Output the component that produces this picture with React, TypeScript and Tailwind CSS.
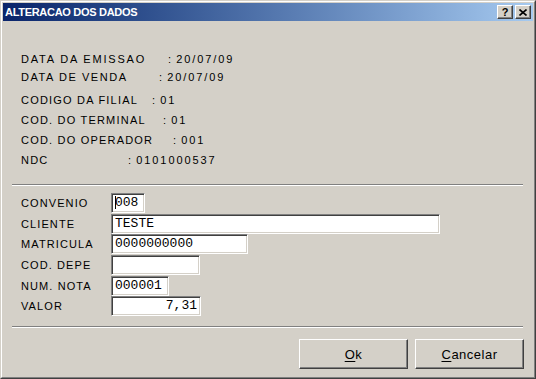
import React from "react";

const SANS = "font-['Liberation_Sans',Arial,sans-serif]";
const MONO = "font-['Liberation_Mono','Courier_New',monospace]";

const INFO = [
  { label: "DATA DA EMISSAO", value: "20/07/09", w: "w-[147px]", mt: "mt-0", t: "tracking-[1.8px]" },
  { label: "DATA DE VENDA", value: "20/07/09", w: "w-[138px]", mt: "mt-[5px]", t: "tracking-[1.55px]" },
  { label: "CODIGO DA FILIAL", value: "01", w: "w-[131px]", mt: "mt-[10px]", t: "tracking-[1.2px]" },
  { label: "COD. DO TERMINAL", value: "01", w: "w-[142px]", mt: "mt-[7px]", t: "tracking-[1.2px]" },
  { label: "COD. DO OPERADOR", value: "001", w: "w-[152px]", mt: "mt-[7px]", t: "tracking-[1.2px]" },
  { label: "NDC", value: "0101000537", w: "w-[107px]", mt: "mt-[7px]", t: "tracking-[1.2px]" },
];

const FIELDS = [
  { label: "CONVENIO", value: "008", w: "w-[34px]", mt: "mt-0", caret: true, right: false },
  { label: "CLIENTE", value: "TESTE", w: "w-[329px]", mt: "mt-px", caret: false, right: false },
  { label: "MATRICULA", value: "0000000000", w: "w-[137px]", mt: "mt-0", caret: false, right: false },
  { label: "COD. DEPE", value: "", w: "w-[89px]", mt: "mt-px", caret: false, right: false },
  { label: "NUM. NOTA", value: "000001", w: "w-[58px]", mt: "mt-px", caret: false, right: false },
  { label: "VALOR", value: "7,31", w: "w-[90px]", mt: "mt-0", caret: false, right: true },
];

const raised =
  "border border-t-white border-l-white border-b-[#404040] border-r-[#404040] shadow-[inset_-1px_-1px_0_#808080] bg-[#d4d0c8]";

const Separator = () => (
  <div className="ml-[9px] w-[511px] h-[2px] border-t border-t-[#808080] border-b border-b-white" />
);

export default function App() {
  return (
    <div className={`w-[536px] h-[379px] bg-[#d4d0c8] text-black ${SANS}`}>
      <div className="w-full h-full border border-t-[#d4d0c8] border-l-[#d4d0c8] border-b-[#404040] border-r-[#404040]">
        <div className="w-full h-full border border-t-white border-l-white border-b-[#808080] border-r-[#808080] p-px flex flex-col">
          {/* Title bar */}
          <div className="h-[18px] shrink-0 flex items-center justify-between pl-[2px] pr-[2px] bg-gradient-to-r from-[#0a246a] to-[#a6caf0]">
            <span className="text-white font-bold text-[11px] leading-[13px] tracking-[-0.3px]">ALTERACAO DOS DADOS</span>
            <div className="flex gap-[2px]">
              <button className={`w-[16px] h-[14px] flex items-center justify-center ${raised}`}>
                <span className="font-bold text-[11px] leading-[11px] text-black">?</span>
              </button>
              <button className={`w-[16px] h-[14px] flex items-center justify-center ${raised}`}>
                <svg width="8" height="7" viewBox="0 0 8 7">
                  <path d="M0.5 0.5 L7.5 6.5 M7.5 0.5 L0.5 6.5" stroke="#000" strokeWidth="1.6" fill="none" />
                </svg>
              </button>
            </div>
          </div>

          {/* Body */}
          <div className="flex flex-col flex-1">
            {/* Info */}
            <div className="flex flex-col pt-[32px] pl-[18px] text-[11px]">
              {INFO.map((r) => (
                <div key={r.label} className={`flex h-[13px] leading-[13px] whitespace-pre ${r.mt}`}>
                  <span className={`shrink-0 ${r.w} ${r.t}`}>{r.label}</span>
                  <span className="tracking-[1.1px]">: </span>
                  <span className="tracking-[1.9px]">{r.value}</span>
                </div>
              ))}
            </div>

            <div className="mt-[17px]">
              <Separator />
            </div>

            {/* Fields */}
            <div className="flex flex-col mt-[7px] pl-[18px]">
              {FIELDS.map((f) => (
                <div key={f.label} className={`flex items-center h-[20px] ${f.mt}`}>
                  <span className="w-[90px] shrink-0 text-[11px] leading-[13px] tracking-[1.1px] whitespace-nowrap">{f.label}</span>
                  <div
                    className={`relative h-[20px] ${f.w} border border-t-[#808080] border-l-[#808080] border-b-white border-r-white bg-white shadow-[inset_1px_1px_0_#404040,inset_-1px_-1px_0_#d4d0c8] pl-[3px] pr-[3px] ${MONO} text-[13px] leading-[18px] whitespace-nowrap overflow-hidden ${f.right ? "text-right" : "text-left"}`}
                  >
                    {f.value}
                    {f.caret && <span className="absolute left-[3px] top-[2px] w-px h-[13px] bg-black" />}
                  </div>
                </div>
              ))}
            </div>

            <div className="mt-[10px]">
              <Separator />
            </div>

            {/* Buttons */}
            <div className="flex justify-end gap-[7px] pr-[9px] mt-[11px]">
              <button className={`w-[109px] h-[30px] ${raised} text-[13px] tracking-[0.5px] leading-[15px]`}>
                <span className="underline underline-offset-2">O</span>k
              </button>
              <button className={`w-[109px] h-[30px] ${raised} text-[13px] tracking-[0.5px] leading-[15px]`}>
                <span className="underline underline-offset-2">C</span>ancelar
              </button>
            </div>
          </div>
        </div>
      </div>
    </div>
  );
}
